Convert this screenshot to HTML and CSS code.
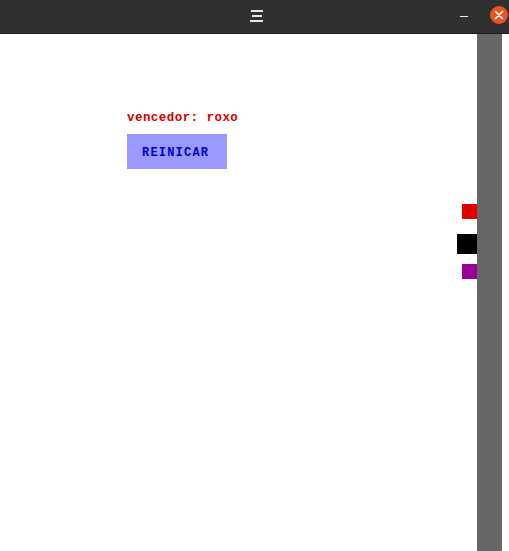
FILE: index.html
```html
<!DOCTYPE html>
<html>
<head>
<meta charset="utf-8">
<link rel="stylesheet" href="styles.css">
</head>
<body>
<div class="window">
  <div class="titlebar">
    <div class="menu-icon"><span></span><span></span><span></span></div>
    <div class="controls">
      <span class="minimize"></span>
      <span class="close">
        <svg width="18" height="18" viewBox="0 0 18 18"><circle cx="9" cy="9" r="9" fill="#e95420"/><path d="M5.5 5.5 L12.5 12.5 M12.5 5.5 L5.5 12.5" stroke="#fff" stroke-width="1.6" stroke-linecap="round"/></svg>
      </span>
    </div>
  </div>
  <div class="content">
    <div class="game">
      <div class="panel">
        <p class="winner">vencedor: roxo</p>
        <button class="restart">REINICAR</button>
      </div>
      <div class="pieces">
        <span class="piece red"></span>
        <span class="piece black"></span>
        <span class="piece purple"></span>
      </div>
    </div>
    <div class="rail"></div>
    <div class="edge"></div>
  </div>
</div>
</body>
</html>
```
FILE: styles.css
```css
html, body {
  margin: 0;
  padding: 0;
  width: 509px;
  height: 551px;
  overflow: hidden;
  background: #fff;
}
.window {
  display: flex;
  flex-direction: column;
  height: 551px;
}
.titlebar {
  height: 33px;
  background: #303030;
  border-bottom: 1px solid #1c1c1c;
  position: relative;
  flex: none;
}
.menu-icon {
  position: absolute;
  left: 250px;
  top: 10px;
  display: flex;
  flex-direction: column;
  align-items: center;
  gap: 3px;
}
.menu-icon span {
  display: block;
  height: 2px;
  width: 12px;
  background: #e8e8e8;
}
.menu-icon span:nth-child(2) { width: 10px; }
.menu-icon span:nth-child(3) { width: 13px; }
.controls {
  position: absolute;
  right: 1px;
  top: 6px;
  display: flex;
  align-items: center;
  gap: 22px;
}
.minimize {
  display: block;
  width: 8px;
  height: 1px;
  background: #f0f0f0;
  margin-top: 3px;
}
.close { display: block; width: 18px; height: 18px; }
.close svg { display: block; }
.content {
  flex: 1;
  display: flex;
}
.game {
  flex: 1;
  display: flex;
  justify-content: space-between;
}
.panel {
  padding: 78px 0 0 127px;
}
.winner {
  margin: 0;
  font-family: "Liberation Mono", monospace;
  font-weight: bold;
  font-size: 12.5px;
  letter-spacing: 0.45px;
  line-height: 12px;
  color: #d00000;
}
.restart {
  display: block;
  margin-top: 10px;
  width: 100px;
  height: 35px;
  border: none;
  background: #9999ff;
  color: #0000c8;
  font-family: "Liberation Mono", monospace;
  font-weight: bold;
  font-size: 12px;
  letter-spacing: 1.2px;
  text-align: left;
  padding: 2px 0 0 15px;
}
.pieces {
  display: flex;
  flex-direction: column;
  align-items: flex-end;
  padding-top: 170px;
}
.piece { display: block; }
.red { width: 15px; height: 15px; background: #e00000; }
.black { width: 20px; height: 20px; background: #000; margin-top: 15px; }
.purple { width: 15px; height: 15px; background: #990099; margin-top: 10px; }
.rail {
  width: 25px;
  background: #666666;
}
.edge {
  width: 7px;
}
```
